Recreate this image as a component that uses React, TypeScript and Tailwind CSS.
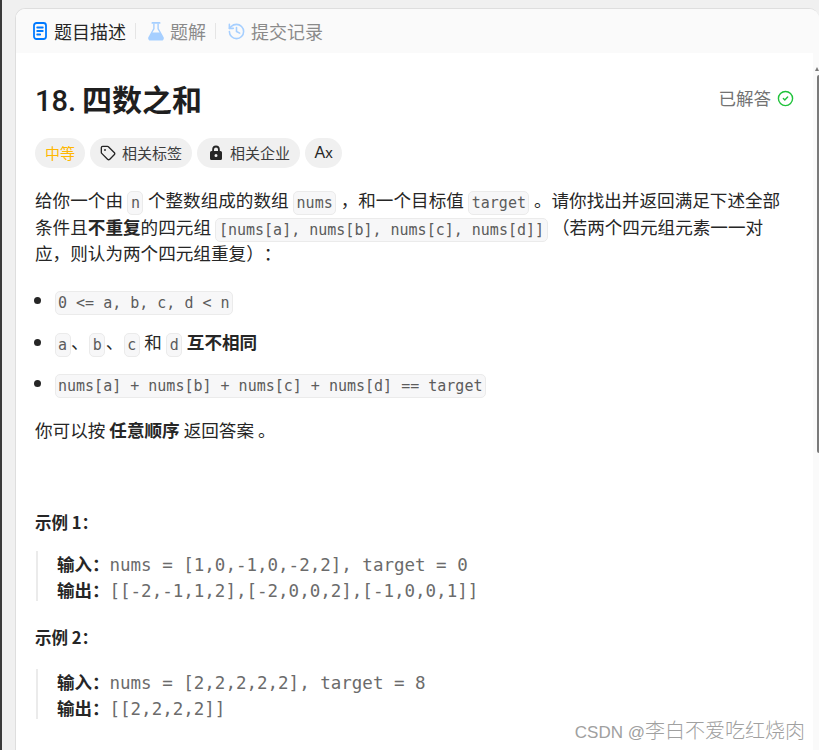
import { Tag, History, CircleCheck } from 'lucide-react';

const Code = ({ children }: { children: React.ReactNode }) => (
  <code className="mx-[0.5px] my-[-4px] inline-block rounded-[5px] border border-[#ebebeb] bg-[#f7f7f8] px-[2.5px] font-['DejaVu_Sans_Mono',monospace] text-[15px] leading-[22px] text-[#5c5c5c] align-[-1px] whitespace-pre">
    {children}
  </code>
);

const Example = ({ title, input, output, className, bodyClass }: { title: string; input: string; output: string; className: string; bodyClass: string }) => (
  <div className={className}>
    <p className="text-[16.5px] leading-[24px] font-bold text-[#262626]">{title}</p>
    <div className={`${bodyClass} ml-[1px] h-[50px] border-l-2 border-[#ebebeb] pl-[19px] text-[17.5px]`}>
      <div className="h-[25.5px] leading-[25px] whitespace-pre">
        <b className="text-[#262626]">输入：</b>
        <span className="font-['DejaVu_Sans_Mono',monospace] text-[#6b6b6b]">{input}</span>
      </div>
      <div className="h-[24.5px] leading-[25px] whitespace-pre">
        <b className="text-[#262626]">输出：</b>
        <span className="font-['DejaVu_Sans_Mono',monospace] text-[#6b6b6b]">{output}</span>
      </div>
    </div>
  </div>
);

export default function App() {
  return (
    <div className="relative h-[750px] w-[819px] overflow-hidden bg-[#f0f0f0] pt-[8px] pl-[15px] font-['Noto_Sans_CJK_SC','Noto_Sans',sans-serif] text-[#262626] [text-spacing-trim:space-all]">
      <div className="absolute top-0 left-0 h-full w-[2px] bg-[#3a3a3a]" />
      <div className="h-[760px] overflow-hidden rounded-t-[10px] border-t border-l border-[#dedede] bg-white">
        <div className="flex h-[44px] items-center bg-[#fafafa] pl-[17px] text-[18px] text-[#8a8a8a]">
          <svg width="14" height="18" viewBox="0 0 14 18" fill="none" stroke="#007aff" strokeWidth="1.8" strokeLinecap="round">
            <rect x="1" y="1" width="12" height="16" rx="2.5" />
            <path d="M4.2 5.5h5.6M4.2 9h5.6M4.2 12.5h3" />
          </svg>
          <span className="ml-[7px] text-[#262626]">题目描述</span>
          <div className="mx-[9px] h-[16px] w-px bg-[#e5e5e5]" />
          <svg width="16" height="19" viewBox="0 0 16 19" fill="#a6cfff" className="ml-[3px]">
            <rect x="3.5" y="0" width="9" height="1.8" rx="0.9" />
            <path d="M5.2 1.5h1.4v5.4L4.4 10.5h7.2L9.4 6.9V1.5h1.4v4.9l4.7 8.6A2.4 2.4 0 0 1 13.4 18.6H2.6A2.4 2.4 0 0 1 .5 15l4.7-8.6z" />
          </svg>
          <span className="ml-[6px]">题解</span>
          <div className="mx-[9px] h-[16px] w-px bg-[#e5e5e5]" />
          <History size={19} strokeWidth={2} className="ml-[2px] text-[#a6cfff]" />
          <span className="ml-[5px]">提交记录</span>
        </div>

        <div className="w-[780px] pt-[26px] pl-[19px]">
          <div className="flex h-[40px] items-center justify-between">
            <h1 className="text-[30px] leading-[40px] font-bold text-[#1f1f1f]">
              <span className="font-['Roboto',sans-serif] text-[29px] font-medium">18.</span>
              <span className="ml-[6px]">四数之和</span>
            </h1>
            <div className="mr-[2px] mb-[2px] flex items-center gap-[6px] text-[17.5px] text-[#737373]">
              已解答
              <CircleCheck size={17} strokeWidth={2} className="text-[#1fc23a]" />
            </div>
          </div>

          <div className="mt-[19px] flex gap-[5px] text-[15px] leading-[30px]">
            <span className="rounded-full bg-[#f0f0f0] px-[10px] text-[#ffb700]">中等</span>
            <span className="flex items-center gap-[6px] rounded-full bg-[#f0f0f0] px-[10px] text-[#3d3d3d]">
              <Tag size={16} strokeWidth={2} className="text-[#262626]" />
              相关标签
            </span>
            <span className="flex items-center gap-[7px] rounded-full bg-[#f0f0f0] pr-[10px] pl-[12px] text-[#3d3d3d]">
              <svg width="14" height="16" viewBox="0 0 14 16" fill="#262626">
                <path d="M3.2 6.5V4.4a3.8 3.8 0 0 1 7.6 0v2.1h-1.8V4.4a2 2 0 0 0-4 0v2.1z" />
                <path fillRule="evenodd" d="M2.5 6h9A1.5 1.5 0 0 1 13 7.5v6a1.5 1.5 0 0 1-1.5 1.5h-9A1.5 1.5 0 0 1 1 13.5v-6A1.5 1.5 0 0 1 2.5 6zM7 9a1.5 1.5 0 1 0 0 3 1.5 1.5 0 0 0 0-3z" />
              </svg>
              相关企业
            </span>
            <span className="flex w-[37px] justify-center rounded-full bg-[#f0f0f0] font-['Liberation_Sans',sans-serif] text-[16px] text-[#262626]">
              A<span className="text-[15px]">x</span>
            </span>
          </div>

          <div className="mt-[19px] text-[17.6px] leading-[26.5px] text-[#262626]">
            <p className="whitespace-nowrap">
              给你一个由 <Code>n</Code> 个整数组成的数组 <Code>nums</Code> ，和一个目标值 <Code>target</Code> 。请你找出并返回满足下述全部
              <br />
              条件且<b>不重复</b>的四元组 <Code>[nums[a], nums[b], nums[c], nums[d]]</Code> （若两个四元组元素一一对
              <br />
              应，则认为两个四元组重复）：
            </p>
            <ul className="mt-[20px] list-disc pl-[19px]">
              <li className="leading-[26px]"><Code>0 &lt;= a, b, c, d &lt; n</Code></li>
              <li className="mt-[16px] leading-[26px]">
                <Code>a</Code>、<Code>b</Code>、<Code>c</Code> 和 <Code>d</Code> <b>互不相同</b>
              </li>
              <li className="mt-[15px] leading-[26px]">
                <Code>nums[a] + nums[b] + nums[c] + nums[d] == target</Code>
              </li>
            </ul>
            <p className="mt-[21px]">你可以按 <b>任意顺序</b> 返回答案 。</p>
          </div>

          <Example className="mt-[67px]" bodyClass="mt-[17px]" title="示例 1：" input="nums = [1,0,-1,0,-2,2], target = 0" output="[[-2,-1,1,2],[-2,0,0,2],[-1,0,0,1]]" />
          <Example className="mt-[24px]" bodyClass="mt-[20px]" title="示例 2：" input="nums = [2,2,2,2,2], target = 8" output="[[2,2,2,2]]" />
        </div>
      </div>

      <div className="absolute top-[53px] right-0 h-[697px] w-[6px] bg-[#fafafa]">
        <div className="absolute top-[14px] right-0 h-0 w-0 border-x-[2px] border-b-[4px] border-x-transparent border-b-[#7a7a7a]" />
        <div className="absolute top-[22px] right-0 h-[378px] w-[2px] rounded-l bg-[#7a7a7a]" />
      </div>
      <div className="absolute right-[14px] bottom-[5px] font-['Noto_Sans_CJK_SC',sans-serif] text-[20px] leading-[24px] font-light text-[#a0a0a0]">
        <span className="font-['Liberation_Sans',sans-serif] text-[17px]">CSDN @</span>李白不爱吃红烧肉
      </div>
    </div>
  );
}
